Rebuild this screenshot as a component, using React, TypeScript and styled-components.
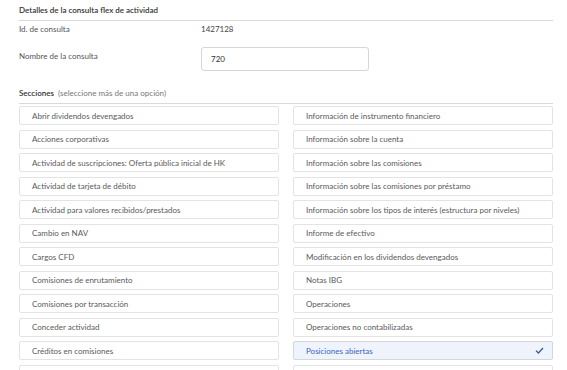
import styled, { createGlobalStyle } from "styled-components";

const GlobalStyle = createGlobalStyle`
  html, body {
    margin: 0;
    padding: 0;
    background: #fff;
  }
  body {
    font-family: Lato, "Liberation Sans", Arial, sans-serif;
    color: #4a4a4a;
  }
`;

// the last row is cut off by the window, so its labels are left blank
const leftItems = [
  "Abrir dividendos devengados",
  "Acciones corporativas",
  "Actividad de suscripciones: Oferta pública inicial de HK",
  "Actividad de tarjeta de débito",
  "Actividad para valores recibidos/prestados",
  "Cambio en NAV",
  "Cargos CFD",
  "Comisiones de enrutamiento",
  "Comisiones por transacción",
  "Conceder actividad",
  "Créditos en comisiones",
  "",
];

const rightItems = [
  "Información de instrumento financiero",
  "Información sobre la cuenta",
  "Información sobre las comisiones",
  "Información sobre las comisiones por préstamo",
  "Información sobre los tipos de interés (estructura por niveles)",
  "Informe de efectivo",
  "Modificación en los dividendos devengados",
  "Notas IBG",
  "Operaciones",
  "Operaciones no contabilizadas",
  "Posiciones abiertas",
  "",
];

const selected = new Set(["Posiciones abiertas"]);

const Page = styled.div`
  padding: 0 14px 0 19px;
  width: 534px;
`;

const SectionTitle = styled.div`
  font-size: 8px;
  font-weight: 600;
  color: #333;
  padding-top: 5px;
  height: 15px;
  border-bottom: 1px solid #d9d9d9;
`;

const FieldRow = styled.div<{ $top: number }>`
  display: grid;
  grid-template-columns: 182px 168px;
  align-items: start;
  margin-top: ${(p) => p.$top}px;
  font-size: 8px;
  color: #555;
`;

const Label = styled.div<{ $pad?: number }>`
  padding-top: ${(p) => p.$pad ?? 0}px;
`;

const Value = styled.div`
  color: #444;
`;

const Input = styled.div`
  box-sizing: border-box;
  height: 24px;
  border: 1px solid #d6d6d6;
  border-radius: 3px;
  padding: 0 9px;
  display: flex;
  align-items: center;
  font-size: 8px;
  color: #333;
`;

const SectionsHead = styled.div`
  margin-top: 17px;
  font-size: 8px;
  height: 15px;
  border-bottom: 1px solid #d9d9d9;
`;

const Strong = styled.span`
  font-weight: 600;
  color: #333;
  margin-right: 4px;
`;

const Hint = styled.span`
  color: #777;
`;

const Grid = styled.div`
  display: grid;
  grid-template-columns: 260px 260px;
  column-gap: 14px;
  row-gap: 4.5px;
  margin-top: 2px;
`;

const Option = styled.div<{ $on?: boolean }>`
  box-sizing: border-box;
  height: 19px;
  border: 1px solid ${(p) => (p.$on ? "#c9d8ef" : "#e3e3e3")};
  background: ${(p) => (p.$on ? "#eef3fc" : "#fff")};
  border-radius: 2px;
  padding: 0 8px 0 12px;
  display: flex;
  align-items: center;
  justify-content: space-between;
  font-size: 8px;
  color: ${(p) => (p.$on ? "#3a67c0" : "#5a5a5a")};
  white-space: nowrap;
`;

const Check = () => (
  <svg width="9" height="7" viewBox="0 0 9 7">
    <path d="M1 3.6 L3.4 6 L8 1" fill="none" stroke="#3a5c9a" strokeWidth="1.3" />
  </svg>
);

export default function App() {
  const rows = leftItems.map((l, i) => [l, rightItems[i]]);
  return (
    <>
      <GlobalStyle />
      <Page>
        <SectionTitle>Detalles de la consulta flex de actividad</SectionTitle>
        <FieldRow $top={3}>
          <Label>Id. de consulta</Label>
          <Value>1427128</Value>
        </FieldRow>
        <FieldRow $top={13}>
          <Label $pad={4}>Nombre de la consulta</Label>
          <Input>720</Input>
        </FieldRow>
        <SectionsHead>
          <Strong>Secciones</Strong>
          <Hint>(seleccione más de una opción)</Hint>
        </SectionsHead>
        <Grid>
          {rows.flat().map((t, i) => (
            <Option key={i} $on={selected.has(t)}>
              <span>{t}</span>
              {selected.has(t) && <Check />}
            </Option>
          ))}
        </Grid>
      </Page>
    </>
  );
}
